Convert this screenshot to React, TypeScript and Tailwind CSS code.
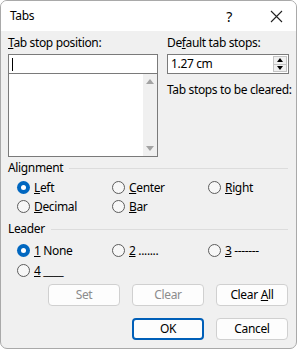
import React from "react";

const font = { fontFamily: '"Noto Sans", "Open Sans", sans-serif', letterSpacing: "-0.35px" };

const Radio: React.FC<{ checked?: boolean; children: React.ReactNode }> = ({ checked, children }) => (
  <div className="flex items-center h-[19px]">
    {checked ? (
      <span className="w-[13px] h-[13px] rounded-full bg-[#0067c0] flex items-center justify-center">
        <span className="w-[5px] h-[5px] rounded-full bg-white" />
      </span>
    ) : (
      <span className="w-[13px] h-[13px] rounded-full border border-[#5c5c5c] bg-[#f7f7f7]" />
    )}
    <span className="ml-[4px] text-[12px] leading-none">{children}</span>
  </div>
);

const GroupTitle: React.FC<{ label: string }> = ({ label }) => (
  <div className="flex items-center h-[16px]">
    <span className="text-[12px] leading-none">{label}</span>
    <span className="flex-1 ml-[6px] h-px bg-[#dcdcdc]" />
  </div>
);

const Btn: React.FC<{ children: React.ReactNode; disabled?: boolean; primary?: boolean }> = ({
  children,
  disabled,
  primary,
}) => (
  <button
    className={
      "w-[72px] h-[22px] rounded-[4px] bg-[#fdfdfd] text-[12px] leading-none flex items-center justify-center " +
      (primary ? "border-2 border-[#005fb8]" : "border border-[#d0d0d0]") +
      (disabled ? " text-[#8c8c8c]" : " text-black")
    }
  >
    {children}
  </button>
);

const App: React.FC = () => {
  return (
    <div className="w-[298px] h-[350px] bg-white" style={font}>
      <div className="w-[297px] h-[349px] border border-[#a9a9a9] rounded-[7px] overflow-hidden flex flex-col bg-[#f0f0f0] text-black">
        <div className="h-[30px] bg-white flex items-center pl-[9px] pr-[13px] shrink-0">
          <span className="text-[12px] flex-1">Tabs</span>
          <span className="text-[14px] mr-[38px]">?</span>
          <svg width="13" height="13" viewBox="0 0 13 13">
            <path d="M1 1 L12 12 M12 1 L1 12" stroke="#222" strokeWidth="1.1" />
          </svg>
        </div>

        <div className="px-[7px] pt-[4px] flex-1">
          <div className="flex">
            <div className="w-[151px]">
              <div className="text-[12px] h-[16px] leading-[16px]">
                <u>T</u>ab stop position:
              </div>
              <div className="mt-[3px] h-[20px] border border-[#7a7a7a] bg-white flex items-center pl-[3px]">
                <span className="w-px h-[13px] bg-black" />
              </div>
              <div className="h-[83px] border border-[#7a7a7a] border-t-0 bg-white flex justify-end">
                <div className="w-[14px] bg-[#f0f0f0] flex flex-col items-center justify-between py-[5px]">
                  <svg width="8" height="5" viewBox="0 0 8 5">
                    <path d="M0 5 L4 0 L8 5 Z" fill="#a3a3a3" />
                  </svg>
                  <svg width="8" height="5" viewBox="0 0 8 5">
                    <path d="M0 0 L4 5 L8 0 Z" fill="#a3a3a3" />
                  </svg>
                </div>
              </div>
            </div>
            <div className="ml-[9px] w-[122px]">
              <div className="text-[12px] h-[16px] leading-[16px]">
                De<u>f</u>ault tab stops:
              </div>
              <div className="mt-[3px] h-[20px] border border-[#7a7a7a] bg-white flex items-center">
                <span className="flex-1 text-[12px] pl-[3px]">1.27 cm</span>
                <div className="w-[14px] h-[16px] mr-[1px] flex flex-col">
                  <div className="flex-1 border border-[#c4c4c4] bg-[#f0f0f0] flex items-center justify-center">
                    <svg width="6" height="4" viewBox="0 0 6 4">
                      <path d="M0 4 L3 0 L6 4 Z" fill="#000" />
                    </svg>
                  </div>
                  <div className="flex-1 border border-t-0 border-[#c4c4c4] bg-[#f0f0f0] flex items-center justify-center">
                    <svg width="6" height="4" viewBox="0 0 6 4">
                      <path d="M0 0 L3 4 L6 0 Z" fill="#000" />
                    </svg>
                  </div>
                </div>
              </div>
              <div className="mt-[8px] text-[12px] h-[16px] leading-[16px] whitespace-nowrap">
                Tab stops to be cleared:
              </div>
            </div>
          </div>

          <div className="mt-[3px] pr-[1px]">
            <GroupTitle label="Alignment" />
            <div className="mt-[2px] pl-[9px] grid grid-cols-[95px_96px_1fr]">
              <Radio checked>
                <u>L</u>eft
              </Radio>
              <Radio>
                <u>C</u>enter
              </Radio>
              <Radio>
                <u>R</u>ight
              </Radio>
              <Radio>
                <u>D</u>ecimal
              </Radio>
              <Radio>
                <u>B</u>ar
              </Radio>
            </div>
          </div>

          <div className="mt-[5px] pr-[1px]">
            <GroupTitle label="Leader" />
            <div className="mt-[4px] pl-[9px] grid grid-cols-[95px_96px_1fr] gap-y-[1px]">
              <Radio checked>
                <u>1</u> None
              </Radio>
              <Radio>
                <u>2</u> .......
              </Radio>
              <Radio>
                <u>3</u> -------
              </Radio>
              <Radio>
                <u>4</u> ____
              </Radio>
            </div>
          </div>

          <div className="mt-[4px] flex justify-end gap-[12px] pr-[1px]">
            <Btn disabled>Set</Btn>
            <Btn disabled>Clear</Btn>
            <Btn>
              Clear <u className="ml-[3px]">A</u>ll
            </Btn>
          </div>
          <div className="mt-[12px] flex justify-end gap-[12px] pr-[1px]">
            <Btn primary>OK</Btn>
            <Btn>Cancel</Btn>
          </div>
        </div>
      </div>
    </div>
  );
};

export default App;
